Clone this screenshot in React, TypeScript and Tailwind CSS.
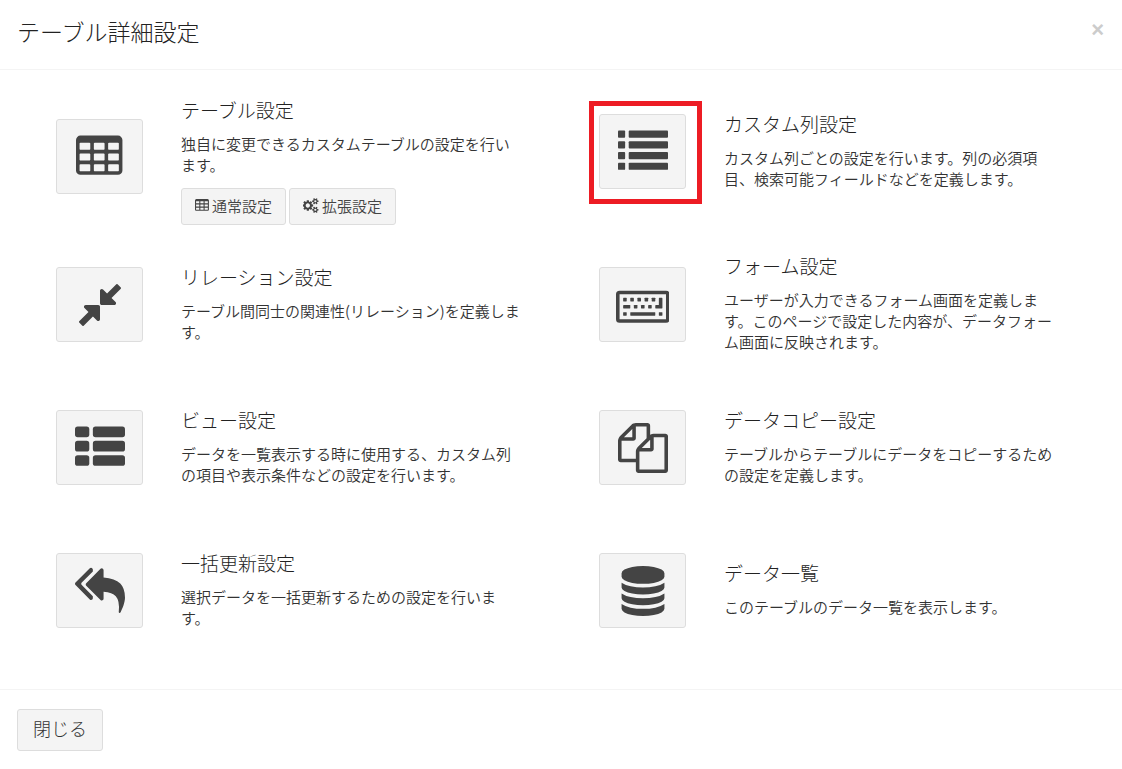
import type { ReactNode } from "react";

type Glyph = { viewBox: string; paths: ReactNode };

const cellColumns = [192, 704, 1216];
const cellRows = [384, 768, 1152];
const cells = cellColumns
  .flatMap((x) =>
    cellRows.map(
      (y) =>
        `M${x + 32} ${y}h320q14 0 23 9t9 23v192q0 14-9 23t-23 9h-320q-14 0-23-9t-9-23v-192q0-14 9-23t23-9z`
    )
  )
  .join("");

const smallGear =
  "v140q0 16-149 31-12 27-30 52 51 113 51 138 0 4-4 7-122 71-124 71-8 0-46-47t-52-68q-20 2-30 2t-30-2q-14 21-52 68t-46 47q-2 0-124-71-4-3-4-7 0-25 51-138-18-25-30-52-149-15-149-31v-140q0-16 149-31 13-29 30-52-51-113-51-138 0-4 4-7 4-2 35-20t59-34 30-16q8 0 46 46.5t52 67.5q20-2 30-2t30 2q51-71 92-112l6-2q4 0 124 70 4 3 4 7 0 25-51 138 17 23 30 52 149 15 149 31z";

const glyphs = {
  table: {
    viewBox: "64 0 1664 1792",
    paths: (
      <path
        fillRule="evenodd"
        d={`M1728 288v1088q0 66-47 113t-113 47h-1344q-66 0-113-47t-47-113v-1088q0-66 47-113t113-47h1344q66 0 113 47t47 113z${cells}`}
      />
    ),
  },
  gears: {
    viewBox: "0 0 1920 1792",
    paths: (
      <path
        d={`M832 896q0-106-75-181t-181-75-181 75-75 181 75 181 181 75 181-75 75-181zm768 512q0-52-38-90t-90-38-90 38-38 90q0 53 37.5 90.5t90.5 37.5 90.5-37.5 37.5-90.5zm0-1024q0-52-38-90t-90-38-90 38-38 90q0 53 37.5 90.5t90.5 37.5 90.5-37.5 37.5-90.5zm-384 421v185q0 10-7 19.5t-16 10.5l-155 24q-11 35-32 76 34 48 90 115 7 11 7 20 0 12-7 19-23 30-82.5 89.5t-78.5 59.5q-11 0-21-7l-115-90q-37 19-77 31-11 108-23 155-7 24-30 24h-186q-11 0-20-7.5t-10-17.5l-23-153q-34-10-75-31l-118 89q-7 7-20 7-11 0-21-8-144-133-144-160 0-9 7-19 10-14 41-53t47-61q-23-44-35-82l-152-24q-10-1-17-9.5t-7-19.5v-185q0-10 7-19.5t16-10.5l155-24q11-35 32-76-34-48-90-115-7-11-7-20 0-12 7-20 22-30 82-89t79-59q11 0 21 7l115 90q34-18 77-32 11-108 23-154 7-24 30-24h186q11 0 20 7.5t10 17.5l23 153q34 10 75 31l118-89q8-7 20-7 11 0 21 8 144 133 144 160 0 8-7 19-12 16-42 54t-45 60q23 48 34 82l152 23q10 2 17 10.5t7 19.5zm640 533${smallGear}m0-1024${smallGear}`}
      />
    ),
  },
  list: {
    viewBox: "0 0 1792 1792",
    paths: [128, 512, 896, 1280].map((y) => (
      <g key={y}>
        <rect x="0" y={y} width="256" height="256" rx="32" />
        <rect x="384" y={y} width="1408" height="256" rx="32" />
      </g>
    )),
  },
  compress: {
    viewBox: "0 0 1792 1792",
    paths: (
      <path d="M896 960v448q0 26-19 45t-45 19-45-19l-144-144-332 332q-10 10-23 10t-23-10l-114-114q-10-10-10-23t10-23l332-332-144-144q-19-19-19-45t19-45 45-19h448q26 0 45 19t19 45zm755-672q0 13-10 23l-332 332 144 144q19 19 19 45t-19 45-45 19h-448q-26 0-45-19t-19-45v-448q0-26 19-45t45-19 45 19l144 144 332-332q10-10 23-10t23 10l114 114q10 10 10 23z" />
    ),
  },
  keyboard: {
    viewBox: "0 0 1920 1792",
    paths: (
      <>
        <rect x="64" y="448" width="1792" height="1024" rx="64" fill="none" stroke="currentColor" strokeWidth="128" />
        {[256, 512, 768, 1024, 1280].map((x) => (
          <rect key={x} x={x} y="640" width="128" height="128" rx="16" />
        ))}
        <rect x="256" y="896" width="256" height="128" rx="16" />
        {[640, 896, 1152].map((x) => (
          <rect key={x} x={x} y="896" width="128" height="128" rx="16" />
        ))}
        <path d="M1552 640h96q16 0 16 16v352q0 16-16 16h-224q-16 0-16-16v-96q0-16 16-16h112v-240q0-16 16-16z" />
        <rect x="256" y="1152" width="128" height="128" rx="16" />
        <rect x="512" y="1152" width="896" height="128" rx="16" />
        <rect x="1536" y="1152" width="128" height="128" rx="16" />
      </>
    ),
  },
  thList: {
    viewBox: "0 0 1792 1792",
    paths: [128, 640, 1152].map((y) => (
      <g key={y}>
        <rect x="0" y={y} width="512" height="384" rx="96" />
        <rect x="640" y={y} width="1152" height="384" rx="96" />
      </g>
    )),
  },
  files: {
    viewBox: "0 0 1792 1792",
    paths: (
      <path d="M1696 384q40 0 68 28t28 68v1216q0 40-28 68t-68 28h-960q-40 0-68-28t-28-68v-288h-544q-40 0-68-28t-28-68v-672q0-40 20-88t48-76l408-408q28-28 76-48t88-20h416q40 0 68 28t28 68v328q68-40 128-40h416zm-544 213l-299 299h299v-299zm-640-384l-299 299h299v-299zm196 647l316-316v-416h-384v416q0 40-28 68t-68 28h-416v640h512v-256q0-40 20-88t48-76zm956 804v-1152h-384v416q0 40-28 68t-68 28h-416v640h896z" />
    ),
  },
  replyAll: {
    viewBox: "0 0 1792 1792",
    paths: (
      <path d="M640 1082v70q0 42-39 59-13 5-25 5-27 0-45-19l-512-512q-19-19-19-45t19-45l512-512q29-31 70-14 39 17 39 59v69l-397 398q-19 19-19 45t19 45zm1152 58q0 58-17 133.5t-38.5 138-48 125-40.5 90.5l-20 40q-8 17-28 17-6 0-9-1-25-8-23-34 43-400-106-565-64-71-170.5-110.5t-267.5-52.5v251q0 42-39 59-13 5-25 5-27 0-45-19l-512-512q-19-19-19-45t19-45l512-512q29-31 70-14 39 17 39 59v262q411 28 599 221 169 173 169 509z" />
    ),
  },
  database: {
    viewBox: "0 0 1792 1792",
    paths: (
      <path d="M896 768q237 0 443-43t325-127v170q0 69-103 128t-280 93.5-385 34.5-385-34.5-280-93.5-103-128v-170q119 84 325 127t443 43zm0 768q237 0 443-43t325-127v170q0 69-103 128t-280 93.5-385 34.5-385-34.5-280-93.5-103-128v-170q119 84 325 127t443 43zm0-384q237 0 443-43t325-127v170q0 69-103 128t-280 93.5-385 34.5-385-34.5-280-93.5-103-128v-170q119 84 325 127t443 43zm0-1152q208 0 385 34.5t280 93.5 103 128v128q0 69-103 128t-280 93.5-385 34.5-385-34.5-280-93.5-103-128v-128q0-69 103-128t280-93.5 385-34.5z" />
    ),
  },
} satisfies Record<string, Glyph>;

type IconName = keyof typeof glyphs;

function Icon({ name, className }: { name: IconName; className: string }) {
  return (
    <svg viewBox={glyphs[name].viewBox} fill="currentColor" aria-hidden="true" className={className}>
      {glyphs[name].paths}
    </svg>
  );
}

type Item = {
  icon: IconName;
  title: string;
  text: string;
  highlighted?: boolean;
  actions?: { icon: IconName; label: string }[];
};

const items: Item[] = [
  {
    icon: "table",
    title: "テーブル設定",
    text: "独自に変更できるカスタムテーブルの設定を行います。",
    actions: [
      { icon: "table", label: "通常設定" },
      { icon: "gears", label: "拡張設定" },
    ],
  },
  {
    icon: "list",
    title: "カスタム列設定",
    text: "カスタム列ごとの設定を行います。列の必須項目、検索可能フィールドなどを定義します。",
    highlighted: true,
  },
  {
    icon: "compress",
    title: "リレーション設定",
    text: "テーブル間同士の関連性(リレーション)を定義します。",
  },
  {
    icon: "keyboard",
    title: "フォーム設定",
    text: "ユーザーが入力できるフォーム画面を定義します。このページで設定した内容が、データフォーム画面に反映されます。",
  },
  {
    icon: "thList",
    title: "ビュー設定",
    text: "データを一覧表示する時に使用する、カスタム列の項目や表示条件などの設定を行います。",
  },
  {
    icon: "files",
    title: "データコピー設定",
    text: "テーブルからテーブルにデータをコピーするための設定を定義します。",
  },
  {
    icon: "replyAll",
    title: "一括更新設定",
    text: "選択データを一括更新するための設定を行います。",
  },
  {
    icon: "database",
    title: "データ一覧",
    text: "このテーブルのデータ一覧を表示します。",
  },
];

function SettingItem({ item }: { item: Item }) {
  return (
    <section className="flex min-h-[143px] items-center gap-[38px] px-[38px] py-2">
      <div className="relative shrink-0">
        <a
          href="#"
          aria-label={item.title}
          className="flex h-[75px] w-[87px] items-center justify-center rounded-[3px] border border-[#ddd] bg-[#f4f4f4] text-[#444]"
        >
          <Icon name={item.icon} className="h-[50px] w-auto" />
        </a>
        {item.highlighted && (
          <span className="pointer-events-none absolute -top-[13px] -right-[16px] -bottom-[15px] -left-[10px] border-5 border-[#ed1c24]" />
        )}
      </div>
      <div className="min-w-0 flex-1">
        <h4 className="mt-[11px] mb-[13px] text-[19px] leading-[21px] font-light text-[#222]">{item.title}</h4>
        <p className="mb-[13px] text-[15px] leading-[21px] [text-spacing-trim:space-all]">{item.text}</p>
        {item.actions && (
          <div className="flex gap-[3px]">
            {item.actions.map((action) => (
              <a
                key={action.label}
                href="#"
                className="flex h-[37px] items-center gap-[3px] rounded-[3px] border border-[#ddd] bg-[#f4f4f4] px-[13px] pb-[2px] text-[15px] leading-[21px] text-[#444]"
              >
                <Icon name={action.icon} className="h-[15px] w-auto" />
                {action.label}
              </a>
            ))}
          </div>
        )}
      </div>
    </section>
  );
}

export default function App() {
  return (
    <main className="min-h-screen bg-white font-['Noto_Sans_CJK_JP',sans-serif] font-[350] text-[#333]">
      <header className="flex h-[70px] items-start justify-between border-b border-[#f4f4f4] pt-4 pr-[18px] pl-[17px]">
        <h1 className="text-[23px] leading-[30px] font-light text-[#222]">テーブル詳細設定</h1>
        <button
          type="button"
          aria-label="閉じる"
          className="font-['Liberation_Sans',sans-serif] text-[22px] leading-7 font-bold text-[#ccc]"
        >
          ×
        </button>
      </header>
      <div className="grid grid-cols-2 items-start px-[18px] pt-[10px] pb-[27px]">
        {items.map((item) => (
          <SettingItem key={item.title} item={item} />
        ))}
      </div>
      <footer className="border-t border-[#f4f4f4] px-[17px] py-[19px]">
        <button
          type="button"
          className="h-[42px] rounded-[3px] border border-[#ddd] bg-[#f4f4f4] px-[15px] pb-1 text-[18px] leading-6 font-light text-[#333]"
        >
          閉じる
        </button>
      </footer>
    </main>
  );
}
